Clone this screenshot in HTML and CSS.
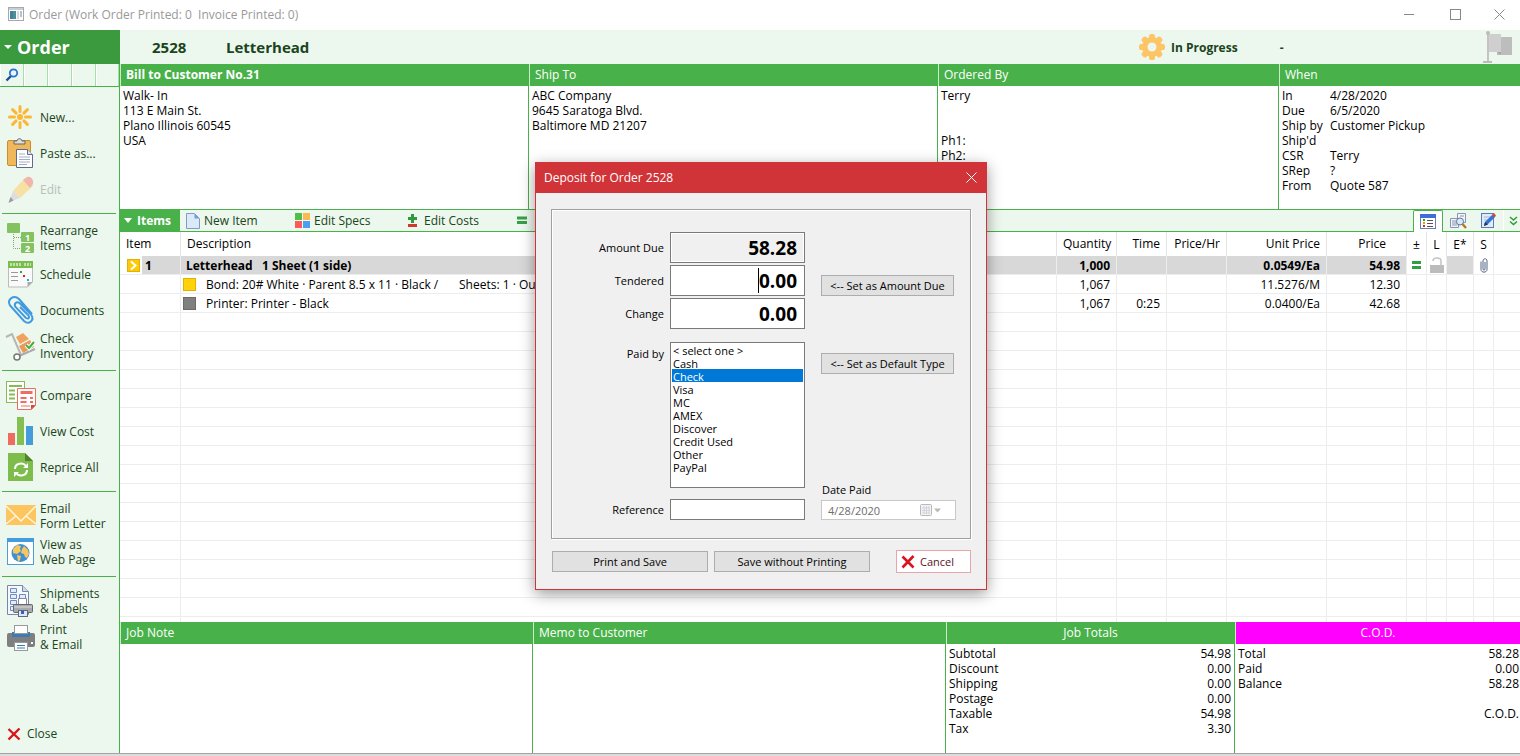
FILE: index.html
```html
<!DOCTYPE html>
<html lang="en">
<head>
    <meta charset="utf-8">
    <title>Order 2528</title>
    <link rel="stylesheet" href="styles.css">
</head>
<body>
    <header class="titlebar">
        <svg class="app-icon" width="16" height="14" viewBox="0 0 16 14"><rect x=".5" y=".5" width="15" height="13" fill="#fff" stroke="#a5a9ad"/><rect x="1" y="1" width="14" height="2" fill="#c9ced2"/><rect x="2" y="4" width="6" height="8" fill="#4f8f93"/><rect x="2" y="4" width="3" height="8" fill="#3f7fa0"/><rect x="9" y="4" width="2" height="8" fill="#d5d9dc"/><rect x="12" y="4" width="2" height="6" fill="#b9c2c8"/></svg>
        <span class="window-title">Order (Work Order Printed: 0&nbsp; Invoice Printed: 0)</span>
        <button class="win-btn" aria-label="Minimize"><svg width="11" height="11"><path d="M0 5.5H10" stroke="#888"/></svg></button>
        <button class="win-btn" aria-label="Maximize"><svg width="11" height="11"><rect x=".5" y=".5" width="10" height="10" fill="none" stroke="#888"/></svg></button>
        <button class="win-btn" aria-label="Close window"><svg width="11" height="11"><path d="M.5.5l10 10M10.5.5l-10 10" stroke="#888"/></svg></button>
    </header>

    <div class="order-bar">
        <button class="order-menu"><svg width="8" height="4"><path d="M0 0h8L4 4z" fill="#fff"/></svg>Order</button>
        <h1 class="order-number">2528</h1>
        <h1 class="order-name">Letterhead</h1>
        <div class="status">
            <svg width="26" height="26" viewBox="0 0 26 26"><g fill="#fdc566"><circle cx="13" cy="13" r="10"/><rect x="10" y="0" width="6" height="26" rx="2"/><rect x="0" y="10" width="26" height="6" rx="2"/><g transform="rotate(45 13 13)"><rect x="10" y="0" width="6" height="26" rx="2"/><rect x="0" y="10" width="26" height="6" rx="2"/></g></g><circle cx="13" cy="13" r="4.5" fill="#ecf7ed"/></svg>
            <b>In Progress</b>
            <b class="dash">-</b>
        </div>
        <svg class="flag" width="30" height="32" viewBox="0 0 30 32"><path d="M5 3v27" stroke="#c4c4c4" stroke-width="2"/><circle cx="5" cy="2" r="2" fill="#bbb"/><path d="M0 31h9" stroke="#bbb" stroke-width="2"/><path d="M14 6h15v18H14z" fill="#bdbdbd"/><path d="M6 3h12v18H6z" fill="#cfcfcf"/><path d="M14 21h4v3z" fill="#a5a5a5"/></svg>
    </div>

    <div class="workspace">
        <nav class="sidebar">
            <div class="quick">
                <button aria-label="Search"><svg width="14" height="14" viewBox="0 0 14 14"><path d="M6 8L1.5 12.5" stroke="#1f4e99" stroke-width="2.4"/><circle cx="8.5" cy="5" r="3.7" fill="#e8f4ff" stroke="#2a73c9" stroke-width="1.8"/></svg></button>
                <button aria-label="Slot 2"></button>
                <button aria-label="Slot 3"></button>
                <button aria-label="Slot 4"></button>
                <button aria-label="Slot 5"></button>
            </div>
            <div class="group first">
                <button class="nav-item">
                    <svg viewBox="0 0 30 30"><g stroke="#fbb735" stroke-width="3" stroke-linecap="round"><path d="M15 4.5v5M15 20.5v5M4.5 15h5M20.5 15h5M7.6 7.6l3.5 3.5M18.900 18.900l3.5 3.5M22.4 7.6l-3.5 3.5M11.1 18.900l-3.5 3.5"/></g><circle cx="15" cy="15" r="3" fill="#fbb735"/></svg>
                    <span>New...</span>
                </button>
                <button class="nav-item">
                    <svg viewBox="0 0 30 30"><rect x="2.5" y="2.5" width="23" height="25" rx="1.500" fill="#efb85a" stroke="#c98e2e"/><path d="M9 6V3h3c0-3 5-3 5 0h3v3z" fill="#ddd" stroke="#666"/><path d="M11.5 11.5h11l5 5v13h-16z" fill="#fff" stroke="#5d6b90"/><path d="M22.5 11.5v5h5" fill="#dde5f4" stroke="#5d6b90"/><path d="M14 16h6M14 19h11M14 21.5h11M14 24h11M14 26.5h8" stroke="#a6aec4"/></svg>
                    <span>Paste as...</span>
                </button>
                <button class="nav-item" disabled>
                    <svg viewBox="0 0 30 30"><path d="M8 17L20 4l8 8-13 12z" fill="#f6e0a4"/><path d="M18 6l4-3c4-1 7 3 6 7l-3 4z" fill="#f2b5ac"/><path d="M8 17l7 7-11 4z" fill="#ddd"/><path d="M5.5 23l3 3.5L3.5 29z" fill="#9a9a9a"/></svg>
                    <span>Edit</span>
                </button>
            </div>
            <div class="group">
                <button class="nav-item">
                    <svg viewBox="0 0 30 30"><g fill="#84c160"><rect x="2" y="0" width="13" height="10" rx="1"/><rect x="16" y="9" width="13" height="10" rx="1"/><rect x="16" y="20" width="13" height="10" rx="1"/></g><path d="M8.5 11v14.500H16M9 14.500h7" stroke="#7aa966" stroke-dasharray="1 1" fill="none"/><text x="20" y="18" class="icon-digit">1</text><text x="20" y="29" class="icon-digit">2</text></svg>
                    <span>Rearrange<br>Items</span>
                </button>
                <button class="nav-item">
                    <svg viewBox="0 0 30 30"><path d="M3.5 8h24v15l-5 5h-19z" fill="#fafafa" stroke="#b9bdb9"/><path d="M22.5 28v-5h5z" fill="#aaa"/><rect x="3" y="2" width="25" height="7" fill="#79bd4c"/><path d="M5 5.5h11M19 5.5h7" stroke="#c3e2ad" stroke-width="3" stroke-dasharray="2 1"/><path d="M6 13.5h7M6 17.5h7M6 21.5h7" stroke="#999"/><rect x="15" y="12" width="2" height="2" fill="#2a4"/><rect x="18" y="16" width="2" height="2" fill="#d22"/><rect x="22" y="20" width="2" height="2" fill="#1bc"/></svg>
                    <span>Schedule</span>
                </button>
                <button class="nav-item">
                    <svg viewBox="0 0 30 30"><path d="M27 19L14 4C9-.5 1.500 4 5 10.500L19 26c5 4.500 11-1 7-6.500L14.500 8c-3-2-6 .5-4 4l10.500 11c2.500 1.500 4-.5 2.500-2.500L15 12" fill="none" stroke="#419ae0" stroke-width="2"/></svg>
                    <span>Documents</span>
                </button>
                <button class="nav-item">
                    <svg viewBox="0 0 30 30"><path d="M1 6l6-3 9 21" fill="none" stroke="#b5b5b5" stroke-width="2"/><path d="M11 6l7-4 6 6-9 5z" fill="#efa35f"/><path d="M14 15l11-6 4 7-11 6z" fill="#e99a58"/><path d="M14 25l16-7" stroke="#aaa" stroke-width="2"/><circle cx="12" cy="26" r="3" fill="#fff" stroke="#777" stroke-width="1.500"/><path d="M21 14l3 3 5-6" stroke="#fff" stroke-width="4" fill="none"/><path d="M21 14l3 3 5-6" stroke="#3fae49" stroke-width="2" fill="none"/></svg>
                    <span>Check<br>Inventory</span>
                </button>
            </div>
            <div class="group">
                <button class="nav-item">
                    <svg viewBox="0 0 30 30"><rect x="1.5" y="1.5" width="18" height="21" fill="#fff" stroke="#84bd55"/><path d="M4 6h13M4 10.5h6M4 14.5h6M4 18.5h6" stroke="#84bd55" stroke-width="2"/><path d="M12.500 8.500h18v17l-4 4h-14z" fill="#fff" stroke="#ef6d60"/><path d="M15.500 12.500h12" stroke="#ef6d60" stroke-width="3"/><path d="M15.500 18h6M25 18h3M15.500 22h6M25 22h3" stroke="#ef6d60" stroke-width="2"/><path d="M16 26h9" stroke="#ef6d60"/><path d="M26 29.500V25h4.500z" fill="#d6453a"/></svg>
                    <span>Compare</span>
                </button>
                <button class="nav-item">
                    <svg viewBox="0 0 30 30"><rect x="3" y="17" width="7" height="12" fill="#ef6b5e"/><rect x="12" y="1" width="7" height="28" fill="#84bf52"/><rect x="21" y="10" width="7" height="19" fill="#449cdb"/></svg>
                    <span>View Cost</span>
                </button>
                <button class="nav-item">
                    <svg viewBox="0 0 30 30"><path d="M3 1h17l8 8v20H3z" fill="#7ebd4c"/><path d="M20 1l8 8h-8z" fill="#4f8330"/><g fill="none" stroke="#fff" stroke-width="2"><path d="M10 17c0-6 8-7 11-3M22 18c0 6-8 7-11 3"/></g><path d="M23 11v5h-5zM9 25v-5h5z" fill="#fff"/></svg>
                    <span>Reprice All</span>
                </button>
            </div>
            <div class="group">
                <button class="nav-item">
                    <svg viewBox="0 0 30 30"><rect x="1" y="4" width="30" height="20" fill="#fdc55d"/><path d="M1 5l15 15L31 5M1 23l10-8M31 23l-10-8" fill="none" stroke="#fff6e0" stroke-width="1.500"/></svg>
                    <span>Email<br>Form Letter</span>
                </button>
                <button class="nav-item">
                    <svg viewBox="0 0 30 30"><rect x="2.5" y="2.5" width="26" height="25" fill="#fff" stroke="#4a9cdb"/><rect x="2" y="1" width="27" height="4" fill="#449bdd"/><circle cx="15.5" cy="16" r="9" fill="#3f8fd4"/><path d="M8 12l4-4 4 1-1 3 1 2-4 3-4-1zM12 18l4 1-1 4-2 2zM19 9l4 4 1 4-2 4-2-1-1-3-3-1 1-4z" fill="#f5c75d"/></svg>
                    <span>View as<br>Web Page</span>
                </button>
            </div>
            <div class="group">
                <button class="nav-item">
                    <svg viewBox="0 0 30 30"><path d="M2.500-.5h15l6 6v23h-21z" fill="#f4f8ff" stroke="#7887a8"/><path d="M17.500-.5v6h6" fill="#cdd9ee" stroke="#7887a8"/><path d="M5.500 2.500h6v4h-6zM5.500 8.500h6v4h-6zM5.500 14.500h6v4h-6zM14.500 8.500h6v4h-6zM5.500 20.500h3v4h-3z" fill="#e3ecfa" stroke="#6f8bc2"/><path d="M13.500 12.500h8v6h-8z" fill="#fff" stroke="#889"/><rect x="8.500" y="18.500" width="19" height="8" rx="1" fill="#a9a9ae" stroke="#66666d"/><path d="M9 21h18" stroke="#ddd"/><rect x="13.500" y="24.500" width="9" height="6" fill="#dce8fc" stroke="#667"/><rect x="16" y="25" width="3" height="3" fill="#2d64c8"/></svg>
                    <span>Shipments<br>&amp; Labels</span>
                </button>
                <button class="nav-item">
                    <svg viewBox="0 0 30 30"><rect x="2" y="11" width="28" height="14" rx="2" fill="#7f7f7f"/><rect x="7" y="10" width="18" height="5" fill="#3c7cb5"/><rect x="9.5" y="3.5" width="13" height="8" fill="#fff" stroke="#999"/><rect x="9.5" y="20.5" width="13" height="8" fill="#fff" stroke="#999"/><path d="M12 23.500h8M12 26h8" stroke="#3c7cb5"/><rect x="26" y="20" width="2" height="2" fill="#fff"/></svg>
                    <span>Print<br>&amp; Email</span>
                </button>
            </div>
            <button class="close-item"><svg width="14" height="14"><path d="M1.5 2l11 10.500M12.500 1.500L1.500 12.500" stroke="#d8141c" stroke-width="2.4"/></svg>Close</button>
        </nav>

        <main class="content">
            <div class="panels info">
                <section class="panel">
                    <h2><b>Bill to Customer No.31</b></h2>
                    <p>Walk- In<br>113 E Main St.<br>Plano Illinois 60545<br>USA</p>
                </section>
                <section class="panel">
                    <h2>Ship To</h2>
                    <p>ABC Company<br>9645 Saratoga Blvd.<br>Baltimore MD 21207</p>
                </section>
                <section class="panel">
                    <h2>Ordered By</h2>
                    <p>Terry<br><br><br>Ph1:<br>Ph2:</p>
                </section>
                <section class="panel">
                    <h2>When</h2>
                    <dl class="when">
                        <dt>In</dt><dd>4/28/2020</dd>
                        <dt>Due</dt><dd>6/5/2020</dd>
                        <dt>Ship by</dt><dd>Customer Pickup</dd>
                        <dt>Ship'd</dt><dd></dd>
                        <dt>CSR</dt><dd>Terry</dd>
                        <dt>SRep</dt><dd>?</dd>
                        <dt>From</dt><dd>Quote 587</dd>
                    </dl>
                </section>
            </div>

            <div class="items-bar">
                <button class="items-menu"><svg width="8" height="5"><path d="M0 0h8L4 5z" fill="#fff"/></svg>Items</button>
                <button class="tool new-item"><svg width="14" height="16"><path d="M.5.5h8l5 5v10H.5z" fill="#dce9f8" stroke="#7f9cc4"/><path d="M8.5.5v5h5z" fill="#6f9fd8"/></svg>New Item</button>
                <button class="tool specs"><svg width="15" height="15"><path d="M0 0h7v7H0z" fill="#4cc04a"/><path d="M8 0h7v7H8z" fill="#fcb94d"/><path d="M0 8h7v7H0z" fill="#fb5a59"/><path d="M8 8h7v7H8z" fill="#4a9ff5"/></svg>Edit Specs</button>
                <button class="tool costs"><svg width="11" height="13"><path d="M5.5 0v9M1 4.5h9" stroke="#2e9a3c" stroke-width="3"/><path d="M1 11.5h9" stroke="#d03a2c" stroke-width="3"/></svg>Edit Costs</button>
                <button class="tool" aria-label="Equal"><svg width="10" height="9"><path d="M0 2h10M0 6.500h10" stroke="#36a046" stroke-width="3"/></svg></button>
                <div class="view-tabs">
                    <button class="tab active" aria-label="List"><svg width="16" height="15"><rect x=".5" y=".5" width="15" height="14" fill="#fff" stroke="#6b7fa8"/><rect width="16" height="4" fill="#3d6fd6"/><path d="M3 6h2" stroke="#2a2" stroke-width="2"/><path d="M3 9h2" stroke="#e8a000" stroke-width="2"/><path d="M3 12h2" stroke="#d22" stroke-width="2"/><path d="M7 6.500h6M7 9.500h6M7 12.500h6" stroke="#555"/></svg></button>
                    <button class="tab" aria-label="Preview"><svg width="17" height="16"><path d="M7.500.5h8v9h-8zM.5 5.500h8v9h-8z" fill="#f0f4fb" stroke="#8896b4"/><path d="M2 8h5M2 10h5M2 12h5M10 3h4" stroke="#8896b4"/><circle cx="10" cy="8.500" r="3.500" fill="#d6e9fa" stroke="#67758f"/><path d="M12.500 11l3.500 4" stroke="#b97722" stroke-width="2.4"/></svg></button>
                    <button class="tab" aria-label="Notes"><svg width="15" height="16"><rect x=".5" y=".5" width="12" height="14" fill="#dfeafa" stroke="#5b7cb4"/><path d="M3 4h7M3 7h5" stroke="#a6b6d2"/><path d="M3 13l1-4 8-8 2.500 2.500-8 8z" fill="#2f74d4"/><path d="M11 2l2-2 2 2.500-2 2z" fill="#d8473c"/><path d="M3 13l1-4 3 2.500z" fill="#333"/></svg></button>
                    <button class="more" aria-label="More"><svg width="9" height="10"><path d="M1 1l3.500 3L8 1M1 5.500l3.500 3 3.500-3" fill="none" stroke="#2f9a36" stroke-width="1.500"/></svg></button>
                </div>
            </div>

            <div class="grid-wrap">
                <table class="grid">
                    <colgroup>
                        <col class="w61"><col><col class="w60"><col class="w50"><col class="w60"><col class="w100"><col class="w80"><col class="w20"><col class="w20"><col class="w27"><col class="w20"><col class="w26">
                    </colgroup>
                    <thead>
                        <tr><th>Item</th><th class="wide">Description</th><th class="num">Quantity</th><th class="num">Time</th><th class="num">Price/Hr</th><th class="num">Unit Price</th><th class="num price">Price</th><th class="mid">±</th><th class="mid">L</th><th class="mid">E*</th><th class="mid">S</th><th class="last"></th></tr>
                    </thead>
                    <tbody>
                        <tr class="selected">
                            <td class="item-cell"><div><svg width="13" height="13"><rect x=".5" y=".5" width="12" height="12" fill="#fdca0a" stroke="#e3b100"/><path d="M4 2.500l4.500 4-4.500 4" fill="none" stroke="#fff" stroke-width="2"/></svg>1</div></td>
                            <td>Letterhead&nbsp;&nbsp; 1 Sheet (1 side)</td>
                            <td class="num">1,000</td><td class="num"></td><td class="num"></td><td class="num">0.0549/Ea</td><td class="num">54.98</td>
                            <td class="mid clear"><svg width="9" height="8"><path d="M0 1.500h9M0 6.500h9" stroke="#2f9f3f" stroke-width="3"/></svg></td>
                            <td class="mid clear"><svg width="14" height="16"><path d="M0 8h14v8H0z" fill="#bcbcbc"/><path d="M3 4c0-4 8-4 8 0v5" fill="none" stroke="#c4c4c4" stroke-width="1.500"/></svg></td>
                            <td></td>
                            <td class="mid clear"><svg width="8" height="15"><path d="M1 3.500v8c0 3.500 6 3.500 6 0V3c0-3-4-3-4 0v8c0 1.500 2 1.500 2 0V4" fill="none" stroke="#566484"/></svg></td>
                            <td class="clear last"></td>
                        </tr>
                        <tr>
                            <td></td>
                            <td class="part"><div><i class="swatch yellow"></i><span class="part-name">Bond: 20# White · Parent 8.5 x 11 · Black /</span><span>Sheets: 1 · Our</span></div></td>
                            <td class="num">1,067</td><td></td><td></td><td class="num">11.5276/M</td><td class="num">12.30</td><td></td><td></td><td></td><td></td><td class="last"></td>
                        </tr>
                        <tr>
                            <td></td>
                            <td class="part"><div><i class="swatch gray"></i><span class="part-name">Printer: Printer - Black</span></div></td>
                            <td class="num">1,067</td><td class="num">0:25</td><td></td><td class="num">0.0400/Ea</td><td class="num">42.68</td><td></td><td></td><td></td><td></td><td class="last"></td>
                        </tr>
                        <tr class="filler"><td></td><td></td><td></td><td></td><td></td><td></td><td></td><td></td><td></td><td></td><td></td><td class="last"></td></tr>
                    </tbody>
                </table>
            </div>

            <div class="panels footer">
                <section class="panel"><h2>Job Note</h2></section>
                <section class="panel"><h2>Memo to Customer</h2></section>
                <section class="panel">
                    <h2 class="centered">Job Totals</h2>
                    <dl class="totals">
                        <dt>Subtotal</dt><dd>54.98</dd>
                        <dt>Discount</dt><dd>0.00</dd>
                        <dt>Shipping</dt><dd>0.00</dd>
                        <dt>Postage</dt><dd>0.00</dd>
                        <dt>Taxable</dt><dd>54.98</dd>
                        <dt>Tax</dt><dd>3.30</dd>
                    </dl>
                </section>
                <section class="panel cod">
                    <h2 class="centered">C.O.D.</h2>
                    <dl class="totals">
                        <dt>Total</dt><dd>58.28</dd>
                        <dt>Paid</dt><dd>0.00</dd>
                        <dt>Balance</dt><dd>58.28</dd>
                        <dt></dt><dd></dd>
                        <dt></dt><dd>C.O.D.</dd>
                    </dl>
                </section>
            </div>
        </main>
    </div>

    <form class="dialog" role="dialog" aria-labelledby="dialogTitle" onsubmit="return false;">
        <div class="dialog-title">
            <span id="dialogTitle">Deposit for Order 2528</span>
            <button type="button" aria-label="Close dialog"><svg width="11" height="11"><path d="M.5.5l10 10M10.5.5l-10 10" stroke="#fff"/></svg></button>
        </div>
        <div class="dialog-body">
            <div class="fields">
                <label for="amountDue">Amount Due</label>
                <input class="amount" id="amountDue" type="text" value="58.28" readonly>
                <span></span>

                <label for="tendered">Tendered</label>
                <div class="caret-box"><input class="amount" id="tendered" type="text" value="0.00"><span class="caret"></span></div>
                <button class="btn low" type="button">&lt;-- Set as Amount Due</button>

                <label for="change">Change</label>
                <input class="amount" id="change" type="text" value="0.00">
                <span></span>

                <label class="top" for="paidBy">Paid by</label>
                <select id="paidBy" size="11">
                    <option>&lt; select one &gt;</option>
                    <option>Cash</option>
                    <option selected>Check</option>
                    <option>Visa</option>
                    <option>MC</option>
                    <option>AMEX</option>
                    <option>Discover</option>
                    <option>Credit Used</option>
                    <option>Other</option>
                    <option>PayPal</option>
                </select>
                <div class="side">
                    <button class="btn" type="button">&lt;-- Set as Default Type</button>
                    <label for="datePaid">Date Paid</label>
                    <div class="date-box">
                        <input id="datePaid" type="text" value="4/28/2020" disabled>
                        <svg width="22" height="13"><rect x=".5" y=".5" width="11" height="11" rx="1" fill="#f3f3f3" stroke="#b9b9b9"/><path d="M2 4h8M2 6.500h8M2 9h8M4 2v8M6.500 2v8M9 2v8" stroke="#d4d4dc"/><path d="M14 4.500h7l-3.500 4z" fill="#b9bbb0"/></svg>
                    </div>
                </div>

                <label class="bottom" for="reference">Reference</label>
                <input class="reference" id="reference" type="text">
            </div>
            <div class="actions">
                <button class="btn" type="submit">Print and Save</button>
                <button class="btn" type="submit">Save without Printing</button>
                <button class="btn cancel" type="button"><svg width="14" height="14"><path d="M1.5 1.5l11 11M12.500 1l-11 11.500" stroke="#d8141c" stroke-width="2.6"/></svg>Cancel</button>
            </div>
        </div>
    </form>
</body>
</html>
```
FILE: styles.css
```css
* {
    box-sizing: border-box;
}

html {
    background-color: #dcdcdc;
}

body {
    margin: 0;
    height: calc(100vh - 2px);
    display: flex;
    flex-direction: column;
    overflow: hidden;
    background-color: #fff;
    border-bottom: 1px solid #a3a3a3;
    font-family: "Open Sans", "Noto Sans", sans-serif;
    font-size: 12px;
    line-height: 15px;
    color: #000;
}

button {
    font: inherit;
    color: inherit;
    background: none;
    border: none;
    padding: 0;
    margin: 0;
    text-align: left;
    white-space: nowrap;
}

svg {
    display: block;
    flex: none;
}

h1, h2, p, dl, dd {
    margin: 0;
    font-weight: normal;
}

/* title bar */
.titlebar {
    display: flex;
    align-items: center;
    height: 30px;
    flex: none;
    padding: 0 0 2px 8px;
    color: #999;
}

.window-title {
    flex: 1;
    padding-left: 5px;
}

.win-btn {
    width: 46px;
    height: 28px;
    display: flex;
    align-items: center;
    justify-content: center;
}

.win-btn:last-child {
    width: 42px;
}

/* order bar */
.order-bar {
    display: flex;
    align-items: center;
    height: 34px;
    flex: none;
    background-color: #ecf7ed;
    color: #1b4420;
}

.order-menu {
    width: 120px;
    height: 34px;
    padding-left: 4px;
    display: flex;
    align-items: center;
    gap: 5px;
    background-color: #3b993e;
    color: #fff;
    font-size: 18px;
    font-weight: bold;
}

.order-number, .order-name {
    font-size: 15px;
    font-weight: bold;
}

.order-number {
    width: 106px;
    padding-left: 32px;
}

.status {
    display: flex;
    align-items: center;
    gap: 6px;
    margin-left: auto;
    width: 344px;
}

.dash {
    margin-left: 36px;
}

.flag {
    margin-right: 7px;
}

.workspace {
    flex: 1;
    display: flex;
    min-height: 0;
}

/* sidebar */
.sidebar {
    width: 120px;
    flex: none;
    display: flex;
    flex-direction: column;
    background-color: #ecf7ed;
    border-right: 1px solid #48b14a;
    color: #1b4420;
}

.quick {
    display: flex;
    height: 23px;
    border-bottom: 1px solid #48b14a;
}

.quick button {
    width: 24px;
    padding: 4px;
    border-right: 1px solid #a9dcab;
    border-left: 1px solid #fff;
}

.quick button:last-child {
    width: 23px;
}

.group {
    margin: 0 3px 0 2px;
    padding: 6px 0;
    border-top: 1px solid #48b14a;
}

.group.first {
    border-top: none;
    padding-top: 12px;
}

.nav-item {
    width: 100%;
    height: 36px;
    padding-left: 3px;
    display: flex;
    align-items: center;
    gap: 5px;
}

.nav-item svg {
    width: 30px;
    height: 30px;
    overflow: visible;
}

.nav-item:disabled {
    color: #b9bfb9;
}

.icon-digit {
    font-size: 9px;
    font-weight: bold;
    fill: #fff;
}

.close-item {
    margin-top: auto;
    margin-bottom: 12px;
    padding-left: 7px;
    display: flex;
    align-items: center;
    gap: 6px;
}

.content {
    flex: 1;
    min-width: 0;
    display: flex;
    flex-direction: column;
}

/* address and total panels */
.panels {
    display: grid;
    flex: none;
}

.info {
    grid-template-columns: 409fr 409fr 341fr 241fr;
    height: 145px;
}

.footer {
    grid-template-columns: 413fr 413fr 289fr 285fr;
    height: 131px;
}

.panel {
    border-right: 1px solid #48b14a;
    min-width: 0;
}

.panel:last-child {
    border-right: none;
}

.panel h2 {
    height: 22px;
    padding-left: 5px;
    border-left: 1px solid #c9ecca;
    background-color: #48b14a;
    color: #fff;
    font-size: 12px;
    line-height: 21px;
}

.panel h2.centered {
    text-align: center;
    padding: 0;
}

.panel p {
    padding: 2px 3px;
}

.panel.cod h2 {
    background-color: #f0f;
}

.when {
    display: grid;
    grid-template-columns: 48px 1fr;
    grid-auto-rows: 15px;
    padding: 2px 3px;
}

.totals {
    display: grid;
    grid-template-columns: 1fr auto;
    grid-auto-rows: 15px;
    padding: 2px 3px 0;
}

.totals dd {
    text-align: right;
}

.cod .totals {
    padding: 2px 1px 0 3px;
}

/* items toolbar */
.items-bar {
    display: flex;
    height: 23px;
    flex: none;
    border-top: 1px solid #48b14a;
    border-bottom: 1px solid #48b14a;
    background-color: #ecf7ed;
    color: #1b4420;
}

.items-menu {
    width: 60px;
    padding-left: 4px;
    display: flex;
    align-items: center;
    gap: 5px;
    background-color: #48b14a;
    color: #fff;
    font-weight: bold;
}

.tool {
    display: flex;
    align-items: center;
    gap: 4px;
    padding-left: 6px;
}

.new-item {
    width: 109px;
}

.specs {
    width: 112px;
}

.costs {
    width: 110px;
    gap: 6px;
}

.view-tabs {
    display: flex;
    margin-left: auto;
}

.tab {
    width: 30px;
    display: flex;
    align-items: center;
    justify-content: center;
}

.tab.active {
    height: 22px;
    background-color: #fff;
    border: 1px solid #48b14a;
    border-width: 1px 1px 0;
    border-radius: 2px 2px 0 0;
}

.more {
    width: 17px;
    padding-left: 5px;
    display: flex;
    align-items: center;
    border-left: 1px solid #fff;
}

/* items grid */
.grid-wrap {
    flex: 1;
    min-height: 0;
    overflow: hidden;
}

.grid {
    width: 100%;
    height: 100%;
    table-layout: fixed;
    border-collapse: separate;
    border-spacing: 0;
}

.w20 { width: 20px; }
.w26 { width: 26px; }
.w27 { width: 27px; }
.w50 { width: 50px; }
.w60 { width: 60px; }
.w61 { width: 61px; }
.w80 { width: 80px; }
.w100 { width: 100px; }

.grid th {
    height: 24px;
    padding: 0 6px 1px;
    font-weight: normal;
    text-align: left;
    border-right: 1px solid #e4e4e4;
}

.grid td {
    height: 19px;
    padding: 0 6px 0 5px;
    white-space: nowrap;
    overflow: hidden;
    border-right: 1px solid #ededed;
    border-bottom: 1px solid #ededed;
}

.grid .last {
    border-right: none;
}

.grid .num {
    text-align: right;
}

.grid .price {
    padding-right: 20px;
}

.grid .mid {
    padding: 0;
    text-align: center;
}

.mid svg {
    margin: 0 auto;
}

.selected td {
    background-color: #d8d8d8;
    font-weight: bold;
}

.selected td.clear {
    background-color: #fff;
}

.selected .item-cell {
    padding-left: 7px;
    background: linear-gradient(to right, #fff 22px, #d8d8d8 22px);
}

.item-cell div {
    display: flex;
    align-items: center;
    gap: 5px;
}

.grid .part {
    padding-left: 2px;
}

.part div {
    display: flex;
    align-items: center;
}

.swatch {
    width: 13px;
    height: 13px;
    margin-right: 10px;
}

.yellow {
    background-color: #ffd20a;
    border: 1px solid #dfb200;
}

.gray {
    background-color: #808080;
    border: 1px solid #6a6a6a;
}

.part-name {
    width: 253px;
}

.grid .filler td {
    height: auto;
    border-bottom: none;
    background: repeating-linear-gradient(to bottom, #fff 0, #fff 18px, #ededed 18px, #ededed 19px);
}

/* deposit dialog */
.dialog {
    position: absolute;
    left: 535px;
    top: 162px;
    width: 452px;
    background-color: #f0f0f0;
    border: 1px solid #d13438;
    box-shadow: 0 4px 14px rgba(0, 0, 0, 0.4);
    font-size: 11px;
    line-height: 13px;
}

.dialog-title {
    display: flex;
    align-items: center;
    justify-content: space-between;
    height: 30px;
    padding: 0 9px 2px 8px;
    background-color: #d13438;
    color: #fff;
    font-size: 12px;
}

.dialog-body {
    padding: 16px 15px;
}

.fields {
    display: grid;
    grid-template-columns: 112px 135px 135px;
    grid-template-rows: 31px 31px 31px 157px 30px;
    row-gap: 2px;
    column-gap: 6px;
    padding: 22px 0 18px;
    border: 1px solid #a0a0a0;
    box-shadow: inset 1px 1px #fff, 1px 1px #fff;
}

.fields > :nth-child(3n) {
    margin-left: 10px;
}

.fields > label {
    align-self: center;
    text-align: right;
}

.fields > label.top {
    align-self: start;
    padding-top: 16px;
}

.fields > label.bottom {
    align-self: end;
    padding-bottom: 4px;
}

.fields input, .fields select {
    width: 135px;
    border: 1px solid #7a7a7a;
    border-radius: 0;
    background-color: #fff;
    color: #000;
    font-family: inherit;
    outline: none;
}

.fields .amount {
    height: 31px;
    padding: 0 7px;
    text-align: right;
    font-size: 19px;
    font-weight: bold;
}

.fields #amountDue {
    background-color: #f0f0f0;
    box-shadow: inset 0 0 0 1px #fff;
}

.caret-box, .date-box {
    position: relative;
}

.caret {
    position: absolute;
    right: 46px;
    top: 3px;
    width: 1px;
    height: 25px;
    background-color: #000;
}

.fields select {
    height: 146px;
    align-self: end;
    padding: 0 1px;
    font-size: 11px;
    overflow: hidden;
}

.fields option {
    min-height: 13px;
    height: 13px;
    padding: 0 1px;
    line-height: 13px;
}

.fields option:checked {
    background: #0078d7 linear-gradient(#0078d7, #0078d7);
    -webkit-text-fill-color: #fff;
}

.side {
    grid-row: span 2;
    display: flex;
    flex-direction: column;
    padding-top: 22px;
}

.side label {
    margin-top: auto;
    padding: 0 0 4px 1px;
}

.fields .reference {
    height: 21px;
    align-self: end;
}

.date-box input {
    display: block;
    height: 20px;
    padding: 0 6px;
    border-color: #c8c8c8;
    color: #6d6d6d;
    font-size: 11px;
}

.date-box svg {
    position: absolute;
    right: 4px;
    top: 4px;
}

.btn {
    height: 21px;
    width: 133px;
    border: 1px solid #adadad;
    background-color: #e1e1e1;
    text-align: center;
}

.low {
    align-self: end;
}

.actions {
    display: flex;
    align-items: center;
    gap: 6px;
    padding: 11px 0 0 1px;
}

.actions .btn {
    width: 156px;
}

.actions .cancel {
    display: flex;
    align-items: center;
    gap: 5px;
    width: 75px;
    height: 23px;
    margin-left: auto;
    padding-left: 4px;
    background-color: #fff;
    border-color: #e8a5ac;
    color: #5a1518;
}
```
